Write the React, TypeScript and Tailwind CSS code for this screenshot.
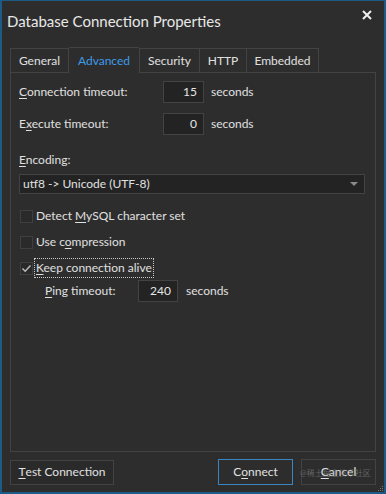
import React from "react";

const U = ({ children }: { children: React.ReactNode }) => (
  <span className="underline underline-offset-2">{children}</span>
);

function NumBox({ value, w }: { value: string; w: string }) {
  return (
    <div className={`${w} h-[22px] bg-[#232323] border border-[#434343] flex items-center justify-end pr-[6px] text-[#e6e6e6]`}>
      {value}
    </div>
  );
}

function Check({ checked, children, focus }: { checked?: boolean; children: React.ReactNode; focus?: boolean }) {
  return (
    <div className="flex items-center h-[18px]">
      <div className="w-[13px] h-[13px] bg-[#2a2a2a] border border-[#3f3f3f] flex items-center justify-center ml-[1px]">
        {checked && (
          <svg width="11" height="11" viewBox="0 0 11 11">
            <path d="M1.5 5.5 L4.2 8.3 L9.5 2.5" stroke="#bdbdbd" strokeWidth="1.4" fill="none" />
          </svg>
        )}
      </div>
      <div className={`ml-[2px] px-[1px] ${focus ? "outline outline-1 outline-dotted outline-[#c8c8c8]" : ""}`}>{children}</div>
    </div>
  );
}

export default function App() {
  return (
    <div
      className="w-[386px] h-[494px] bg-[#2d2d2d] text-[#e0e0e0] text-[12px] relative border-l-2 border-r-2 border-b-2 border-t border-[#1d5b87] flex flex-col"
      style={{ fontFamily: "Lato, 'Noto Sans CJK SC', sans-serif" }}
    >
      {/* title bar */}
      <div className="h-[46px] flex items-start justify-between">
        <div className="text-[15px] text-[#e8e8e8] ml-[5px] mt-[9px]">Database Connection Properties</div>
        <svg className="mt-[9px] mr-[12px]" width="10" height="10" viewBox="0 0 10 10">
          <path d="M1 1 L9 9 M9 1 L1 9" stroke="#f0f0f0" strokeWidth="2" />
        </svg>
      </div>

      {/* tabs */}
      <div className="flex ml-[8px] h-[26px] items-end">
        <div className="h-[25px] w-[59px] border border-[#434343] border-b-0 flex items-center justify-center">General</div>
        <div className="h-[26px] w-[70px] border-t border-[#434343] flex items-center justify-center text-[#3d9be9] bg-[#2d2d2d] relative z-10">Advanced</div>
        <div className="h-[25px] w-[61px] border border-[#434343] border-b-0 flex items-center justify-center">Security</div>
        <div className="h-[25px] w-[47px] border border-l-0 border-[#434343] border-b-0 flex items-center justify-center">HTTP</div>
        <div className="h-[25px] w-[72px] border border-l-0 border-[#434343] border-b-0 flex items-center justify-center">Embedded</div>
      </div>

      {/* panel */}
      <div className="mx-[8px] -mt-px h-[380px] border border-[#434343] flex flex-col pl-[8px] pr-[10px] pt-[8px]">
        <div className="flex items-center h-[22px]">
          <div className="w-[144px]"><U>C</U>onnection timeout:</div>
          <NumBox value="15" w="w-[41px]" />
          <div className="ml-[7px]">seconds</div>
        </div>
        <div className="flex items-center h-[22px] mt-[10px]">
          <div className="w-[144px]">E<U>x</U>ecute timeout:</div>
          <NumBox value="0" w="w-[41px]" />
          <div className="ml-[7px]">seconds</div>
        </div>
        <div className="mt-[17px] h-[16px] leading-[16px]"><U>E</U>ncoding:</div>
        <div className="mt-[6px] h-[20px] bg-[#232323] border border-[#434343] flex items-center justify-between pl-[3px] pr-[6px]">
          <span>utf8 -&gt; Unicode (UTF-8)</span>
          <svg width="8" height="5" viewBox="0 0 8 5"><path d="M0 0 L8 0 L4 4 Z" fill="#8a8a8a" /></svg>
        </div>
        <div className="flex flex-col">
          <div className="mt-[13px]"><Check>Detect <U>M</U>ySQL character set</Check></div>
          <div className="mt-[8px]"><Check>Use c<U>o</U>mpression</Check></div>
          <div className="mt-[8px]"><Check checked focus><U>K</U>eep connection alive</Check></div>
        </div>
        <div className="flex items-center h-[22px] mt-[3px] ml-[26px]">
          <div className="w-[93px]"><U>P</U>ing timeout:</div>
          <NumBox value="240" w="w-[40px]" />
          <div className="ml-[8px]">seconds</div>
        </div>
      </div>

      {/* buttons */}
      <div className="flex items-center mt-[7px] ml-[8px] mr-[8px] h-[26px]">
        <div className="w-[104px] h-[25px] border border-[#434343] bg-[#2a2a2a] flex items-center justify-center"><U>T</U>est Connection</div>
        <div className="flex-1" />
        <div className="w-[75px] h-[26px] border border-[#3b86c0] bg-[#2d2d2d] flex items-center justify-center">C<U>o</U>nnect</div>
        <div className="w-[75px] h-[26px] ml-[8px] border border-[#434343] bg-[#2d2d2d] flex items-center justify-center relative">
          <U>C</U>ancel
          <span className="absolute left-[-2px] top-[7px] text-[8px] text-[#8c8c8c]/60 whitespace-nowrap">@稀土掘金技术社区</span>
        </div>
      </div>
      <svg className="absolute right-0 bottom-0" width="6" height="6" viewBox="0 0 6 6">
        <rect x="4" y="0" width="1" height="1" fill="#777" />
        <rect x="2" y="2" width="1" height="1" fill="#777" />
        <rect x="4" y="2" width="1" height="1" fill="#777" />
        <rect x="0" y="4" width="1" height="1" fill="#777" />
        <rect x="2" y="4" width="1" height="1" fill="#777" />
        <rect x="4" y="4" width="1" height="1" fill="#777" />
      </svg>
    </div>
  );
}
